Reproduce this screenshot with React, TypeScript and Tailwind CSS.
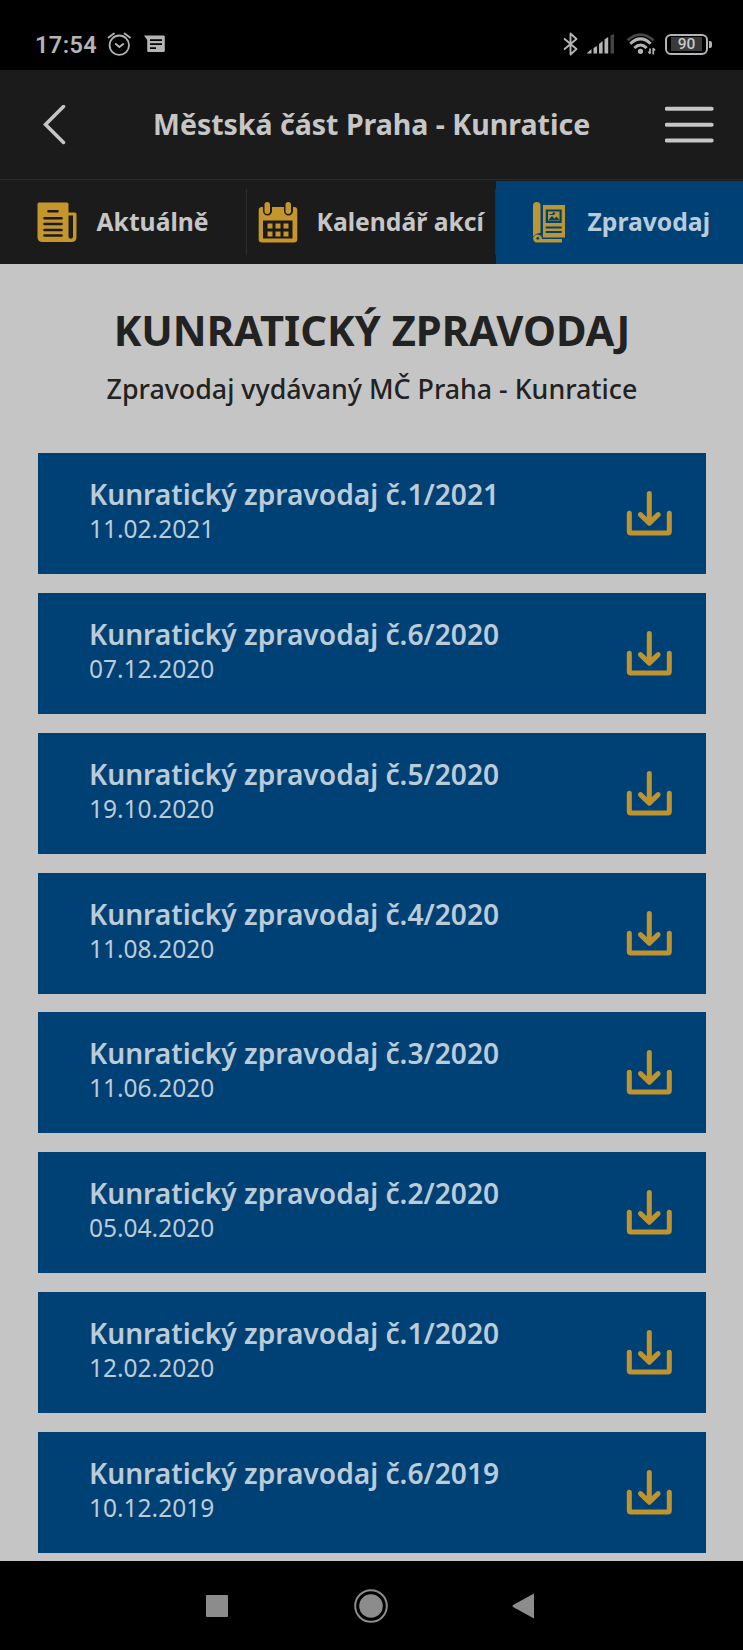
import React from "react";

const issues = [
  { title: "Kunratický zpravodaj č.1/2021", date: "11.02.2021" },
  { title: "Kunratický zpravodaj č.6/2020", date: "07.12.2020" },
  { title: "Kunratický zpravodaj č.5/2020", date: "19.10.2020" },
  { title: "Kunratický zpravodaj č.4/2020", date: "11.08.2020" },
  { title: "Kunratický zpravodaj č.3/2020", date: "11.06.2020" },
  { title: "Kunratický zpravodaj č.2/2020", date: "05.04.2020" },
  { title: "Kunratický zpravodaj č.1/2020", date: "12.02.2020" },
  { title: "Kunratický zpravodaj č.6/2019", date: "10.12.2019" },
];

function StatusBar() {
  return (
    <div className="flex h-[70px] items-center bg-black pt-[18px] pl-[35px] text-[#b4b4b4]">
      <span className="w-[72px] pt-[3px] font-['Roboto'] text-[23.5px] leading-none font-semibold tracking-[0.4px]">17:54</span>
      <svg className="h-[24px] w-[24px]" viewBox="0 0 24 24" fill="none" stroke="currentColor" strokeWidth="1.8" strokeLinecap="round">
        <circle cx="12.3" cy="13.2" r="9.7" />
        <path d="M1.5 5.5 7 1.5M17.5 1.5 23 5.5" />
        <path d="m8.8 12 3.6 3 3.8-3" strokeWidth="2" />
      </svg>
      <svg className="ml-[13px] h-[18px] w-[21px]" viewBox="0 0 21 18">
        <path d="M0 0.5h19.5q1.3 0 1.3 1.3v14q0 1.3-1.3 1.3h-15q-1.3 0-1.3-1.3V5z" fill="currentColor" />
        <path d="M6 5.2h12M6 9.2h12M6 13.2h6" stroke="#000" strokeWidth="1.7" />
      </svg>

      <svg className="ml-[397.5px] h-[24px] w-[15px]" viewBox="0 0 15 24" fill="none" stroke="currentColor" strokeWidth="1.9" strokeLinejoin="round">
        <path d="M1 6.5 13.5 17 7.5 22.5V1.5L13.5 7 1 17.5" />
      </svg>
      <svg className="ml-[8px] h-[20px] w-[29px]" viewBox="0 0 29 20" fill="currentColor">
        <path d="M0.5 19.5 5.5 15v4.5zM7.5 14l3.6-2v7.5H7.5zM13 10l3.6-3v12.5H13zM18.5 5.5l3.7-2.5v16.5h-3.7z" />
        <path d="M24.5 1.5 28 0v19.5h-3.5z" fill="#444" />
      </svg>
      <svg className="ml-[11px] h-[24px] w-[30px]" viewBox="0 0 30 24" fill="none" stroke="currentColor" strokeWidth="2.9">
        <path d="M1.5 8.3Q14.5-3 27.5 8.3" stroke="#484848" strokeWidth="2.5" />
        <path d="M4.3 11.7Q14.5 2 24.7 11.7M8.3 16Q14.5 10 20.7 16" />
        <circle cx="14.5" cy="19.3" r="2.6" fill="currentColor" stroke="none" />
        <path d="M24 16.5v5M27.3 16v6.5" strokeWidth="1.7" />
        <path d="M22 19.5l2 2.5M27.3 16.5l2 2" strokeWidth="1.2" />
      </svg>
      <div className="ml-[9.5px] flex h-[21px] w-[43px] items-center justify-center rounded-[6px] border-2 border-[#b4b4b4] p-[3px]">
        <span className="flex h-[14px] w-[31px] items-center justify-center bg-[#3a3a3a] pt-[2px] font-['Roboto'] text-[15.5px] leading-none font-medium text-[#c8c8c8]">
          90
        </span>
      </div>
      <div className="ml-[1px] h-[7px] w-[3px] rounded-r-[2px] bg-[#b4b4b4]" />
    </div>
  );
}

function Header() {
  return (
    <header className="flex h-[109px] items-center bg-[#1b1b1b] text-[#c6c6c6]">
      <svg className="ml-[42px] h-[40px] w-[24px]" viewBox="0 0 24 40" fill="none" stroke="currentColor" strokeWidth="3.5" strokeLinecap="round">
        <path d="M21.5 1.5 3.5 19.5 21.5 37.5" />
      </svg>
      <h1 className="ml-[87px] w-[512px] pb-[1px] text-[28.5px] leading-none font-bold whitespace-nowrap">Městská část Praha - Kunratice</h1>
      <svg className="h-[40px] w-[49px]" viewBox="0 0 49 40" stroke="currentColor" strokeWidth="4" strokeLinecap="round">
        <path d="M1.7 3.7h45M1.7 19.7h45M1.7 35.5h45" />
      </svg>
    </header>
  );
}

function NewsIcon() {
  return (
    <svg className="h-[41px] w-[40px]" viewBox="0 0 40 41" fill="none">
      <path d="M2 0.5h28q1.5 0 1.5 1.5v8.5h6.5q1.5 0 1.5 1.5v23q0 5-5 5h-29q-5 0-5-5V2Q.5.5 2 .5z" fill="#c4962b" />
      <path d="M31.5 13.5h4.5V35a2.3 2.3 0 0 1-4.5 0z" fill="#1b1b1b" />
      <path d="M11.5 9.3h9M7.5 16.3h17M7.5 22h17M7.5 28h17M7.5 33.5h17" stroke="#1b1b1b" strokeWidth="2.6" strokeLinecap="round" />
    </svg>
  );
}

function CalendarIcon() {
  return (
    <svg className="h-[41px] w-[40px]" viewBox="0 0 40 41" fill="#c4962b">
      <path d="M4 5h32q3.3 0 3.3 3.3v29q0 3.3-3.3 3.3H4q-3.3 0-3.3-3.3v-29Q.7 5 4 5z" />
      <path d="M5 0h9v9a4.5 4.5 0 0 1-9 0zM26 0h9v9a4.5 4.5 0 0 1-9 0z" fill="#1b1b1b" />
      <rect x="6.5" y="0" width="5.5" height="12" rx="2.7" />
      <rect x="27.5" y="0" width="5.5" height="12" rx="2.7" />
      <rect x="5" y="18.5" width="29.5" height="18" fill="#1b1b1b" />
      <path d="M9.5 21.5h5v5h-5zM17.5 21.5h5v5h-5zM25.5 21.5h5v5h-5zM9.5 29.5h5v5h-5zM17.5 29.5h5v5h-5zM25.5 29.5h5v5h-5z" />
    </svg>
  );
}

function JournalIcon() {
  return (
    <svg className="h-[41px] w-[33px]" viewBox="0 0 33 41" fill="#bb9632">
      <path d="M0 3.8a3.7 3.7 0 0 1 7.5 0V31Q3 31 0 34.5z" />
      <path d="M10 3h22v32.5H10Q9.5 32 10 31z" />
      <path d="M5 32.7a4 4 0 0 1 4 4.3h20v3.5H5a4 4 0 1 1 0-7.8z" />
      <circle cx="4.8" cy="36.3" r="1.4" fill="#004175" />
      <path d="M12.7 7.5h16v13.5h-16z" fill="#004175" />
      <path d="M15 9.5h11.5v9H15z" />
      <path d="M15 12h4l1.5-2 2 1-1.5 2h-3zM15.5 18l3.5-4 2.5 2.5 2-2 3 3.5z" fill="#004175" />
      <path d="M12.7 25.5h16M12.7 30h16" stroke="#004175" strokeWidth="1.9" />
    </svg>
  );
}

function Tabs() {
  return (
    <nav className="flex h-[85px] border-t border-[#2b2b2b] bg-[#1b1b1b] text-[24.7px] leading-none font-bold whitespace-nowrap text-[#c6c6c6]">
      <div className="flex w-[246px] items-center pl-[37px]">
        <NewsIcon />
        <span className="ml-[19.5px]">Aktuálně</span>
      </div>
      <div className="my-[9px] w-[1px] bg-[#2d2d2d]" />
      <div className="flex w-[248px] items-center pl-[11px]">
        <CalendarIcon />
        <span className="ml-[18.5px]">Kalendář akcí</span>
      </div>
      <div className="my-[9px] w-[1px] bg-[#2d2d2d]" />
      <div className="mt-[1px] flex grow items-center bg-[#004175] pb-[1px] pl-[37px] text-[#b9cbdb]">
        <JournalIcon />
        <span className="ml-[21.5px]">Zpravodaj</span>
      </div>
    </nav>
  );
}

function IssueCard({ title, date }: { title: string; date: string }) {
  return (
    <div className="flex h-[121px] shrink-0 justify-between bg-[#004175] pr-[33px] pl-[51px] text-[#bccbd8]">
      <div className="pt-[23px]">
        <div className="text-[28.15px] leading-[36px] font-semibold whitespace-nowrap">{title}</div>
        <div className="pt-[1px] text-[24.5px] leading-[32px]">{date}</div>
      </div>
      <svg
        className="mt-[36px] h-[47px] w-[47px]"
        viewBox="0 0 47 47"
        fill="none"
        stroke="#bf942f"
        strokeWidth="5"
        strokeLinecap="round"
        strokeLinejoin="round"
      >
        <path d="M23.3 4.6v29M14.5 25.6l8.8 8.5 8.8-8.5" />
        <path d="M3.3 24.3v18.2q0 1.5 1.5 1.5h37q1.5 0 1.5-1.5V24.3" />
      </svg>
    </div>
  );
}

function NavBar() {
  return (
    <div className="flex h-[89px] items-center bg-black text-[#8c8c8c]">
      <div className="ml-[206px] h-[22px] w-[22px] rounded-[1px] bg-[#8c8c8c]" />
      <svg className="ml-[126px] h-[34px] w-[34px]" viewBox="0 0 34 34">
        <circle cx="17" cy="17" r="15.8" fill="none" stroke="currentColor" strokeWidth="2" />
        <circle cx="17" cy="17" r="11.8" fill="currentColor" />
      </svg>
      <svg className="ml-[124px] h-[26px] w-[22px]" viewBox="0 0 22 26">
        <path d="M22 0.5v25L1 14q-1-1 0-2z" fill="currentColor" />
      </svg>
    </div>
  );
}

export default function App() {
  return (
    <div className="flex h-[1650px] w-[743px] flex-col overflow-hidden bg-[#c5c5c5] font-['Noto_Sans','Open_Sans',sans-serif]">
      <StatusBar />
      <Header />
      <Tabs />

      <main className="flex h-[1297px] flex-col pr-[37px] pl-[38px] text-center text-[#222]">
        <h2 className="mt-[37px] text-[41.7px] leading-[58px] font-bold whitespace-nowrap">KUNRATICKÝ ZPRAVODAJ</h2>
        <p className="mt-[12px] text-[26.8px] leading-[36px] font-medium whitespace-nowrap">Zpravodaj vydávaný MČ Praha - Kunratice</p>

        <div className="mt-[46px] flex flex-col gap-[18.85px] text-left">
          {issues.map((issue) => (
            <IssueCard key={issue.title} title={issue.title} date={issue.date} />
          ))}
        </div>
      </main>

      <NavBar />
    </div>
  );
}
